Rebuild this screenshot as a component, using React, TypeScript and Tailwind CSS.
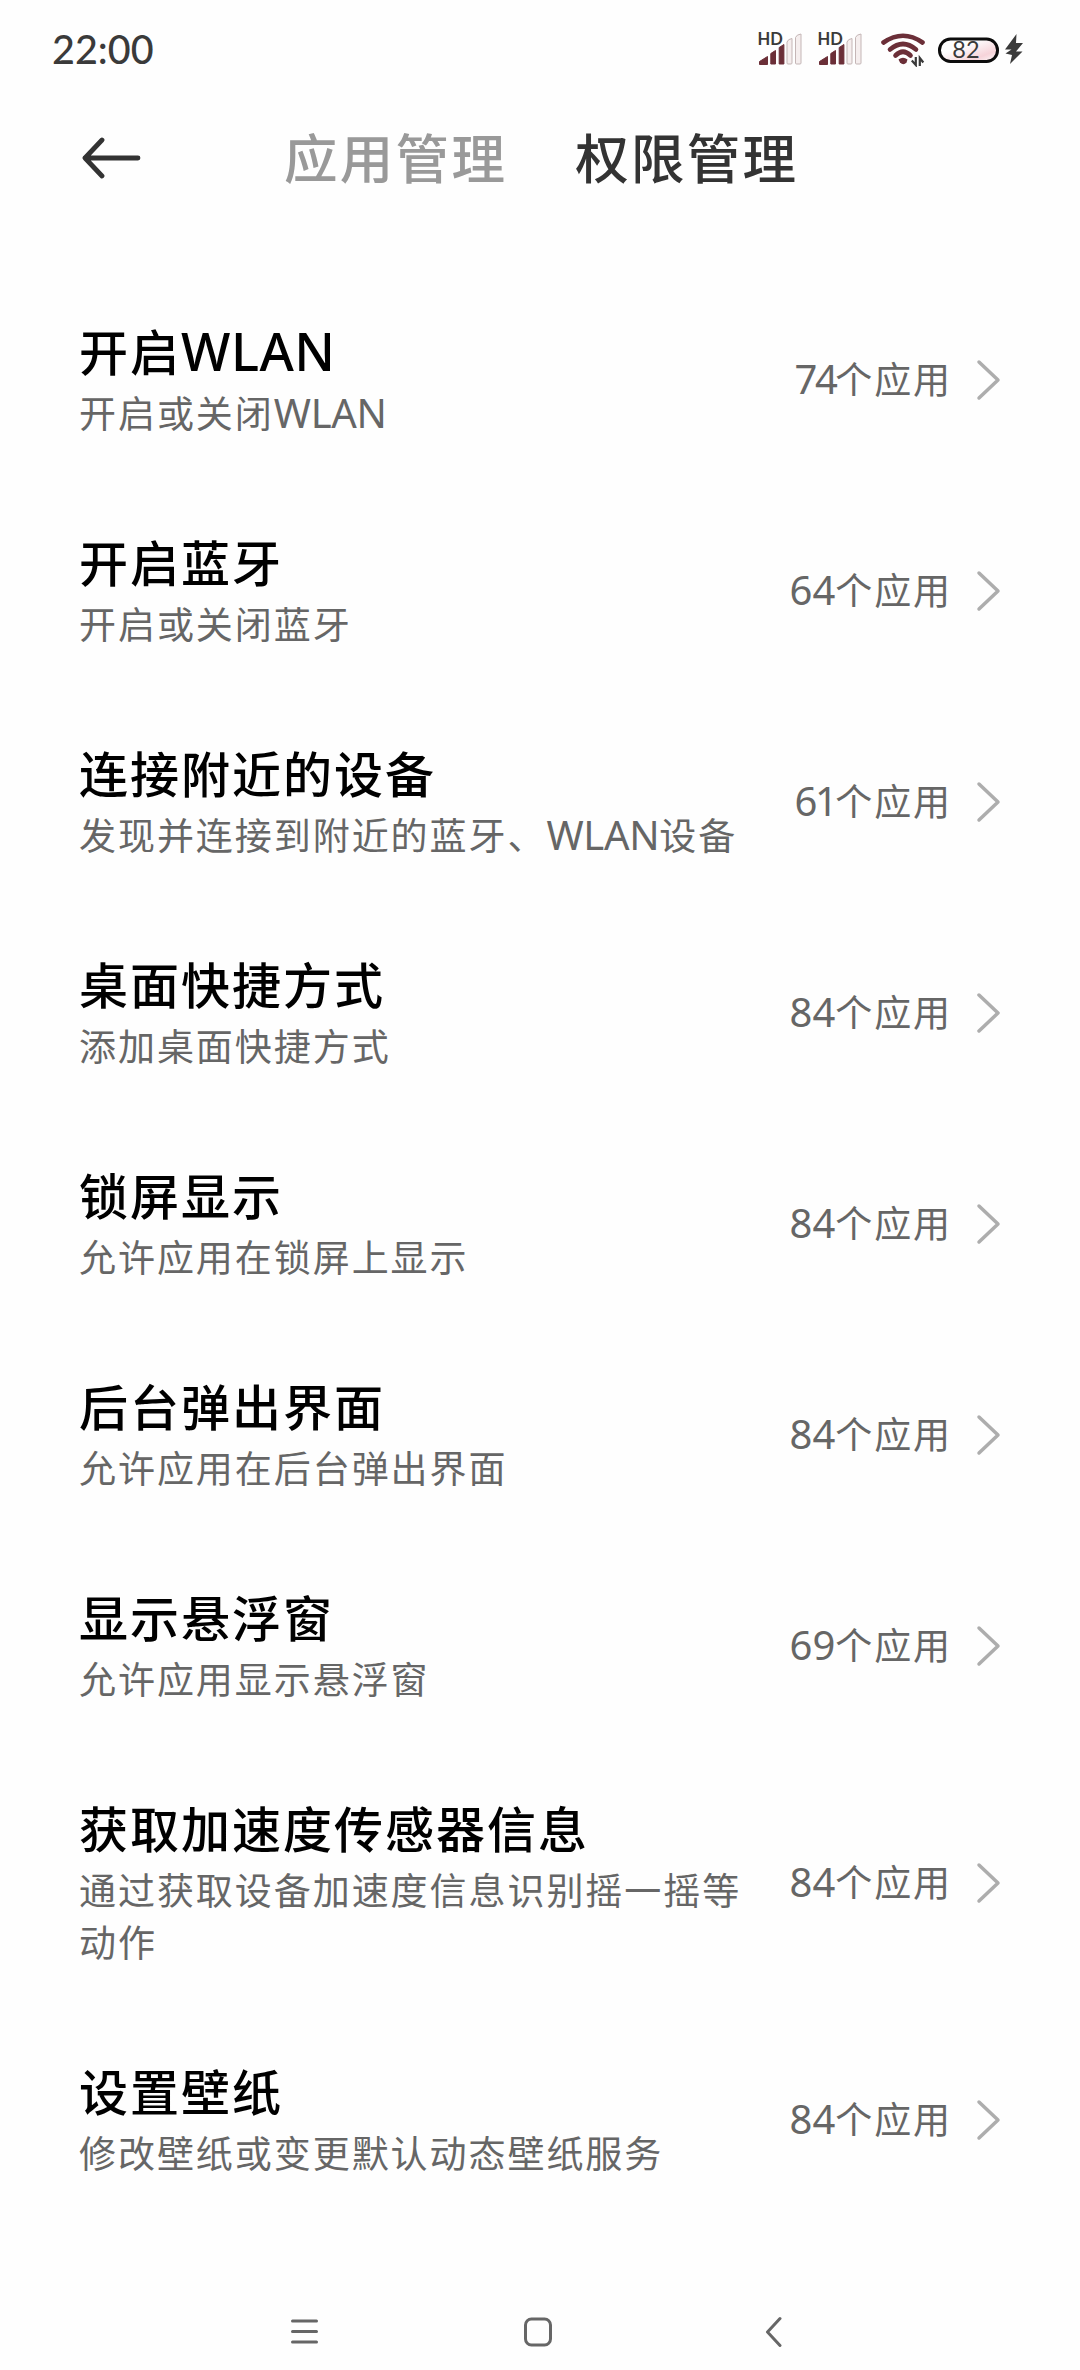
import React from 'react';

interface Permission {
  title: string;
  desc: string;
  count: number;
}

const permissions: Permission[] = [
  { title: '开启WLAN', desc: '开启或关闭WLAN', count: 74 },
  { title: '开启蓝牙', desc: '开启或关闭蓝牙', count: 64 },
  { title: '连接附近的设备', desc: '发现并连接到附近的蓝牙、WLAN设备', count: 61 },
  { title: '桌面快捷方式', desc: '添加桌面快捷方式', count: 84 },
  { title: '锁屏显示', desc: '允许应用在锁屏上显示', count: 84 },
  { title: '后台弹出界面', desc: '允许应用在后台弹出界面', count: 84 },
  { title: '显示悬浮窗', desc: '允许应用显示悬浮窗', count: 69 },
  { title: '获取加速度传感器信息', desc: '通过获取设备加速度信息识别摇一摇等动作', count: 84 },
  { title: '设置壁纸', desc: '修改壁纸或变更默认动态壁纸服务', count: 84 },
];

// Latin runs are set slightly larger and tighter than the Chinese text
const MixedText: React.FC<{ text: string; latinClass: string }> = ({ text, latinClass }) => (
  <>
    {text.split(/([A-Z]+)/).map((part, i) =>
      /^[A-Z]+$/.test(part) ? <span key={i} className={latinClass}>{part}</span> : part
    )}
  </>
);

const SignalIcon = () => (
  <svg width="46" height="34" viewBox="0 0 46 34" className="shrink-0 overflow-visible">
    <path d="M1.5 32.5v-3l8-5v8z" fill="#6b2f38" stroke="#6b2f38" strokeLinejoin="round" />
    <path d="M12.800 32V21.500l4.700-3V32z" fill="#6b2f38" stroke="#6b2f38" strokeLinejoin="round" />
    <path d="M21.200 32V15.500l4.700-3V32z" fill="#6b2f38" stroke="#6b2f38" strokeLinejoin="round" />
    <path d="M29 31V10q1-3 5-3.500V31q0 1-1 1h-3q-1 0-1-1z" fill="#f5eeee" stroke="#c4b6b6" strokeWidth="1" />
    <path d="M37.500 31V5.500q1-3 5.500-3.500V31q0 1-1 1h-3.500q-1 0-1-1z" fill="#f5eeee" stroke="#c4b6b6" strokeWidth="1" />
    <text x="-0.5" y="13" fontSize="16.500" fontWeight="700" fill="#3a3a3a" fontFamily="Lato, sans-serif">HD</text>
  </svg>
);

const WifiIcon = () => (
  <svg width="46" height="36" viewBox="0 0 46 36" className="shrink-0">
    <g fill="none" stroke="#6b2f38" strokeWidth="4.600" strokeLinecap="round">
      <path d="M2.500 11.500Q22-2 41.500 11.500" />
      <path d="M9 18.500Q22 7.500 35 18.500" />
      <path d="M14.500 24.500Q22 17 29.500 24.500" />
    </g>
    <path d="M17.500 28.500q4.500-3.500 9 0l-1 3q-3 3.500-6.500 0z" fill="#6b2f38" />
    <path d="M34.800 26v8l-4-4.500M38.800 35v-8l3.500 4.500" fill="none" stroke="#3a3a3a" strokeWidth="2.200" />
  </svg>
);

const BatteryIcon = () => (
  <svg width="86" height="34" viewBox="0 0 86 34" className="shrink-0">
    <defs>
      <linearGradient id="charge" x1="0" y1="0" x2="1" y2="1">
        <stop offset="0.350" stopColor="#fefefe" />
        <stop offset="0.750" stopColor="#f6d3d9" />
        <stop offset="1" stopColor="#fefefe" />
      </linearGradient>
    </defs>
    <rect x="1.500" y="7" width="58" height="22.500" rx="11" fill="url(#charge)" stroke="#0c0c0c" strokeWidth="3" />
    <text x="28" y="26" fontSize="23.500" textAnchor="middle" fill="#3a3a3a" fontFamily="Lato, sans-serif">82</text>
    <path d="M78.500 2L67 17.500h6.500L67.500 21.500l6.500 1.500-2 9L84.500 19.500h-6.500l7-8.500h-7z" fill="#3a3a3a" />
  </svg>
);

const StatusBar = () => (
  <div className="flex h-[98px] items-center justify-between pl-[52px] pr-[56px]">
    <span className="font-[Lato] text-[39.5px] font-medium leading-none text-[#3a3a3a]">22:00</span>
    <div className="flex items-center">
      <div className="flex gap-[14px]">
        <SignalIcon />
        <SignalIcon />
      </div>
      <div className="ml-[17px] mr-[11px] flex">
        <WifiIcon />
      </div>
      <BatteryIcon />
    </div>
  </div>
);

const Header = () => (
  <header className="flex h-[120px] items-center pl-[82px] text-[53.5px] leading-none tracking-[2.3px]">
    <svg width="60" height="42" viewBox="0 0 60 42" fill="none" stroke="#333" strokeWidth="4.800" strokeLinecap="round" strokeLinejoin="round">
      <path d="M20 3L3 21l17 18M3 21h53" />
    </svg>
    <span className="ml-[142px] pt-[2px] font-medium text-[#999]">应用管理</span>
    <span className="ml-[68px] pt-[2px] font-medium text-[#333]">权限管理</span>
  </header>
);

const PermissionRow: React.FC<{ item: Permission }> = ({ item }) => (
  <li className="flex items-center justify-between pb-[45px] pl-[79px] pr-[78px] pt-[46px]">
    <div className="max-w-[672px]">
      <div className="h-16 text-[49px] font-medium leading-[64px] tracking-[2px] text-black">
        <MixedText text={item.title} latinClass="text-[52.5px] leading-none tracking-[0.5px]" />
      </div>
      <div className="mt-1 text-[37px] leading-[52px] tracking-[1.95px] text-[#666]">
        <MixedText text={item.desc} latinClass="text-[40px] leading-none tracking-[-0.3px]" />
      </div>
    </div>
    <div className="flex shrink-0 items-center">
      <span className="flex items-baseline text-[37px] leading-[52px] text-[#666]">
        <span className={item.count === 74 || item.count === 61 ? 'text-[40px] leading-none tracking-[-2.5px]' : 'text-[40px] leading-none'}>
          {item.count}
        </span>
        <span className="tracking-[1.9px]">个应用</span>
      </span>
      <svg className="ml-6" width="26" height="42" viewBox="0 0 26 42" fill="none" stroke="#adadad" strokeWidth="3.500" strokeLinecap="round" strokeLinejoin="round">
        <path d="M3 3l19 18L3 39" />
      </svg>
    </div>
  </li>
);

const NavBar = () => (
  <nav className="mt-auto flex h-[78px] items-center text-[#666]">
    <svg className="ml-[289px]" width="32" height="32" viewBox="0 0 32 32" fill="none" stroke="currentColor" strokeWidth="3" strokeLinecap="round">
      <path d="M3.500 6h24M3.500 16.500h24M3.500 27h24" />
    </svg>
    <svg className="ml-[201px]" width="32" height="32" viewBox="0 0 32 32" fill="none" stroke="currentColor" strokeWidth="3">
      <rect x="3.500" y="4" width="25" height="26" rx="6" />
    </svg>
    <svg className="ml-[203px]" width="32" height="32" viewBox="0 0 32 32" fill="none" stroke="currentColor" strokeWidth="3" strokeLinecap="round" strokeLinejoin="round">
      <path d="M23 3.500L10.500 17 23 30.500" />
    </svg>
  </nav>
);

export default function App() {
  return (
    <div className="flex h-[2370px] w-[1080px] flex-col overflow-hidden bg-[#fefefe] font-['Noto_Sans','Noto_Sans_CJK_SC',sans-serif]">
      <StatusBar />
      <Header />
      <ul className="mt-[56px]">
        {permissions.map((item) => (
          <PermissionRow key={item.title} item={item} />
        ))}
      </ul>
      <NavBar />
    </div>
  );
}
